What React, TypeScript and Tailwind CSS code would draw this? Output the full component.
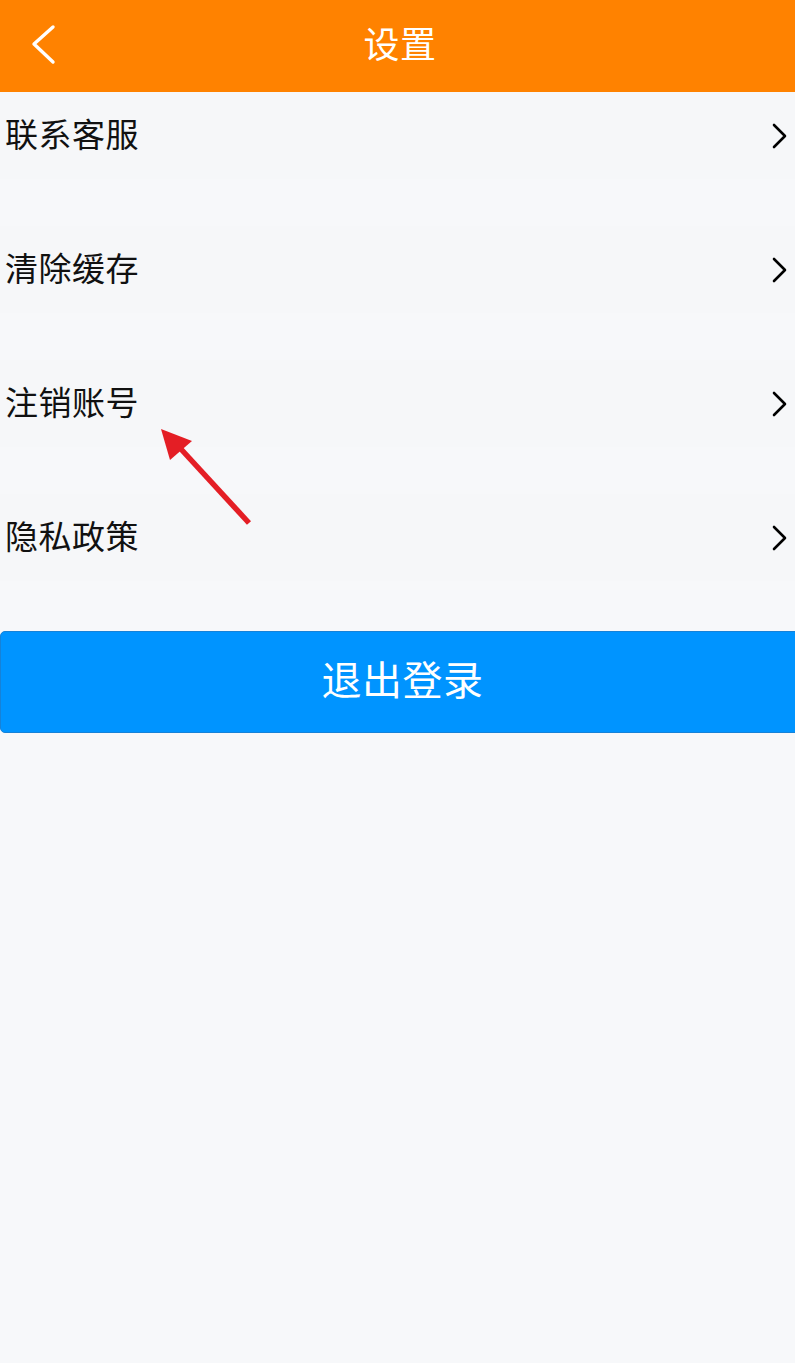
import React from "react";

const font = { fontFamily: '"Noto Sans CJK SC", "Noto Sans", sans-serif' };

function Chevron() {
  return (
    <svg width="18" height="26" viewBox="0 0 18 26" className="shrink-0">
      <path d="M3 2 L14 13 L3 24" fill="none" stroke="#000" strokeWidth="2.6" strokeLinecap="round" strokeLinejoin="round" />
    </svg>
  );
}

const items = ["联系客服", "清除缓存", "注销账号", "隐私政策"];

export default function App() {
  return (
    <div className="relative min-h-[1363px] w-[795px] bg-[#f7f8fa]" style={font}>
      <header className="relative flex h-[92px] items-center justify-center bg-[#ff8200]">
        <svg width="30" height="44" viewBox="0 0 30 44" className="absolute left-[28px] top-[23px]">
          <path d="M25 4 L6 21 L25 39" fill="none" stroke="#fff" strokeWidth="3.4" strokeLinecap="round" strokeLinejoin="round" />
        </svg>
        <h1 className="-mt-[8px] ml-[5px] text-[36px] leading-none font-normal text-white tracking-[0.5px]">设置</h1>
      </header>
      <div className="flex flex-col">
        {items.map((t) => (
          <div key={t} className="flex h-[134px] flex-col">
            <div className="flex h-[87px] items-center justify-between pl-[5px] pr-[6px] bg-[#f6f7f9]">
              <span className="-mt-[5px] text-[33px] leading-none text-[#111] tracking-[0.5px]">{t}</span>
              <Chevron />
            </div>
            <div className="h-[47px] bg-[#f7f8fa]" />
          </div>
        ))}
      </div>
      <div className="mt-[3px] -mr-[10px] flex h-[102px] items-center justify-center rounded-[5px] border border-[#1682d8] bg-[#0094ff]">
        <span className="-mt-[8px] text-[40px] leading-none text-white tracking-[0.5px]">退出登录</span>
      </div>
      <svg width="795" height="1363" viewBox="0 0 795 1363" className="pointer-events-none absolute left-0 top-0">
        <line x1="249" y1="523" x2="180" y2="448" stroke="#e41e25" strokeWidth="5.5" />
        <polygon points="161,429 192,441 170,460" fill="#e41e25" />
      </svg>
    </div>
  );
}
